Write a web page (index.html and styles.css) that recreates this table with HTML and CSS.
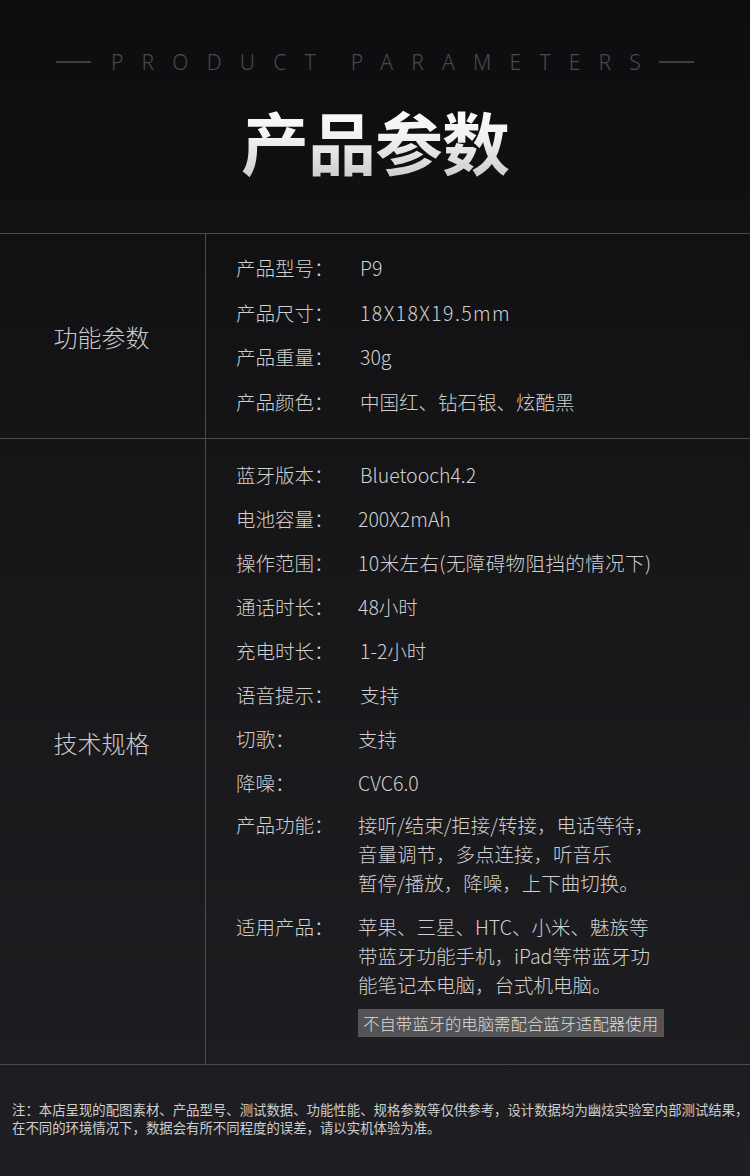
FILE: index.html
```html
<!DOCTYPE html>
<html lang="zh-CN">
<head>
<meta charset="utf-8">
<title>产品参数</title>
<link rel="stylesheet" href="styles.css">
</head>
<body>
<div class="page">
  <header class="hero">
    <div class="eyebrow">
      <span class="dash"></span>
      <span class="eyebrow-text">PRODUCT<span class="gap"></span>PARAMETERS</span>
      <span class="dash"></span>
    </div>
    <h1 class="title">产品参数</h1>
  </header>

  <section class="spec spec-a">
    <div class="cat">功能参数</div>
    <div class="rows rows-a">
      <div class="row"><span class="k">产品型号：</span><span class="v v-r">P9</span></div>
      <div class="row"><span class="k">产品尺寸：</span><span class="v v-r wide">18X18X19.5mm</span></div>
      <div class="row"><span class="k">产品重量：</span><span class="v v-r">30g</span></div>
      <div class="row"><span class="k">产品颜色：</span><span class="v v-r">中国红、钻石银、炫酷黑</span></div>
    </div>
  </section>

  <section class="spec spec-b">
    <div class="cat">技术规格</div>
    <div class="rows rows-b">
      <div class="row"><span class="k">蓝牙版本：</span><span class="v v-r">Bluetooch4.2</span></div>
      <div class="row"><span class="k">电池容量：</span><span class="v">200X2mAh</span></div>
      <div class="row"><span class="k">操作范围：</span><span class="v range">10米左右(无障碍物阻挡的情况下)</span></div>
      <div class="row"><span class="k">通话时长：</span><span class="v">48小时</span></div>
      <div class="row"><span class="k">充电时长：</span><span class="v v-r">1-2小时</span></div>
      <div class="row"><span class="k">语音提示：</span><span class="v v-r">支持</span></div>
      <div class="row"><span class="k">切歌：</span><span class="v">支持</span></div>
      <div class="row"><span class="k">降噪：</span><span class="v">CVC6.0</span></div>
      <div class="row multi"><span class="k">产品功能：</span><span class="v">接听/结束/拒接/转接，电话等待，<br>音量调节，多点连接，听音乐<br>暂停/播放，降噪，上下曲切换。</span></div>
      <div class="row multi"><span class="k">适用产品：</span><span class="v">苹果、三星、HTC、小米、魅族等<br>带蓝牙功能手机，iPad等带蓝牙功<br>能笔记本电脑，台式机电脑。</span></div>
      <div class="note-wrap"><span class="note">不自带蓝牙的电脑需配合蓝牙适配器使用</span></div>
    </div>
  </section>

  <footer class="foot">
    <p>注：本店呈现的配图素材、产品型号、测试数据、功能性能、规格参数等仅供参考，设计数据均为幽炫实验室内部测试结果，<br>在不同的环境情况下，数据会有所不同程度的误差，请以实机体验为准。</p>
  </footer>
</div>
</body>
</html>
```

FILE: styles.css
```css
* { box-sizing: border-box; }
html, body { margin: 0; padding: 0; }
body {
  background: #111113;
  font-family: "Noto Sans CJK SC", "Noto Sans", sans-serif;
}
.page {
  width: 750px;
  height: 1176px;
  overflow: hidden;
  background: linear-gradient(180deg, #0d0d0f 0%, #121214 25%, #18181b 55%, #1f1f23 100%);
  color: #cfcfcf;
}
.hero {
  height: 233px;
  padding-top: 48px;
  display: flex;
  flex-direction: column;
  align-items: center;
}
.eyebrow {
  display: flex;
  align-items: center;
  height: 28px;
}
.dash {
  display: block;
  width: 35px;
  height: 2px;
  background: #3f3f42;
}
.eyebrow-text {
  font-family: "Noto Sans", "Open Sans", sans-serif;
  font-weight: 300;
  font-size: 21px;
  letter-spacing: 18.2px;
  color: #4a4a4d;
  padding-left: 20px;
  padding-right: 0;
  line-height: 28px;
}
.gap { display: inline-block; width: 17px; }
.title {
  margin: 18px 0 0 0;
  font-size: 68px;
  line-height: 94px;
  font-weight: 700;
  letter-spacing: -1px;
  background: linear-gradient(180deg, #ffffff 0%, #f2f2f2 45%, #c4c4c4 100%);
  -webkit-background-clip: text;
  background-clip: text;
  color: transparent;
}
.spec {
  display: grid;
  grid-template-columns: 206px 1fr;
  border-top: 1px solid #4c4c4f;
}
.spec-b { border-bottom: 1px solid #4c4c4f; }
.cat {
  border-right: 1px solid #4c4c4f;
  display: flex;
  align-items: center;
  justify-content: center;
  font-size: 24px;
  font-weight: 300;
  color: #c9c9c9;
  padding-right: 2px;
}
.spec-b .cat { padding-bottom: 18px; }
.rows {
  padding-left: 30px;
  display: flex;
  flex-direction: column;
}
.rows-a { padding-top: 12px; padding-bottom: 14px; }
.rows-b { padding-top: 14px; padding-bottom: 27px; }
.row {
  display: flex;
  font-size: 19.5px;
  font-weight: 300;
  line-height: 44px;
  height: 44px;
  color: #d0d0d0;
}
.rows-a .row { line-height: 44.5px; height: 44.5px; }
.row.multi {
  height: auto;
  line-height: 29px;
  padding: 5px 0 10px;
}
.k { width: 122px; flex: none; }
.v { white-space: nowrap; }
.v-r { padding-left: 2px; }
.wide { letter-spacing: 1.4px; }
.range { letter-spacing: 0.4px; }
.note-wrap { padding-left: 122px; margin-top: 0; }
.note {
  display: inline-block;
  background: #545456;
  color: #dcdcdc;
  font-size: 16.4px;
  font-weight: 300;
  line-height: 28px;
  padding: 0 6px 0 5px;
}
.foot {
  padding: 35px 12px 0;
}
.foot p {
  margin: 0;
  font-size: 13.4px;
  line-height: 18px;
  color: #cdcdcd;
  white-space: nowrap;
  letter-spacing: 0;
}
```
